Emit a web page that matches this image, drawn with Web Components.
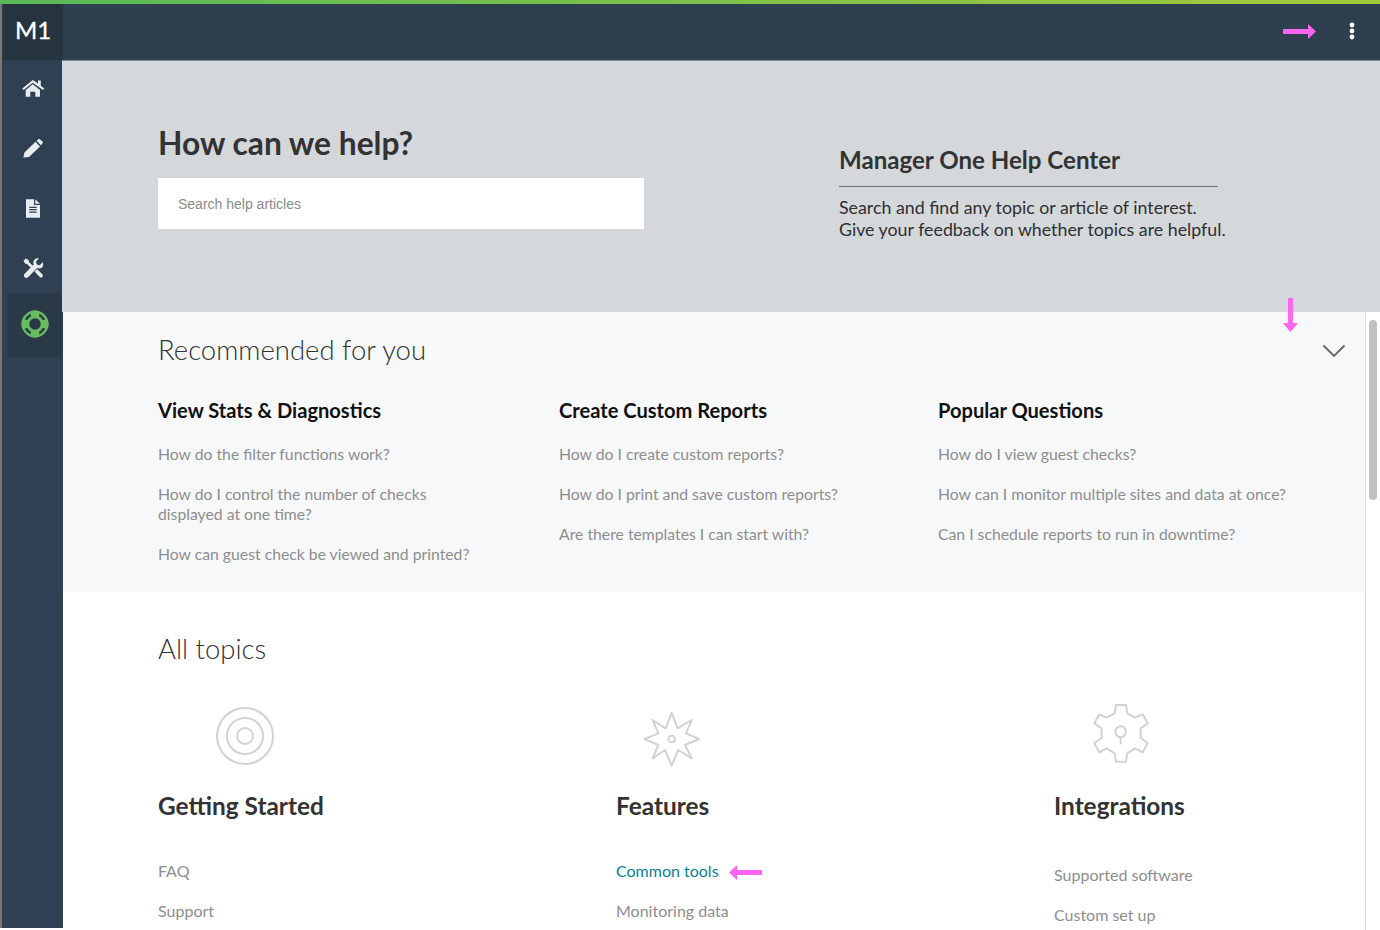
<!DOCTYPE html>
<html>
<head>
<meta charset="utf-8">
<title>Manager One Help Center</title>
<style>
    html, body { margin: 0; height: 930px; overflow: hidden; background: #fff; }
    body { font-family: Lato, "Liberation Sans", sans-serif; }
</style>
</head>
<body>
<m1-app>
    <m1-topbar slot="top"></m1-topbar>
    <m1-sidenav slot="side">
        <m1-navitem icon="home"></m1-navitem>
        <m1-navitem icon="pencil"></m1-navitem>
        <m1-navitem icon="file"></m1-navitem>
        <m1-navitem icon="tools"></m1-navitem>
        <m1-navitem icon="help" active></m1-navitem>
    </m1-sidenav>
    <help-hero></help-hero>
    <div class="scroll-row" style="display:flex">
        <div style="flex:1;min-width:0;border-right:1px solid #dcdcdc;height:618px;overflow:hidden">
            <rec-panel>
                <link-col heading="View Stats &amp; Diagnostics" style="width:401px">
                    <span style="max-width:300px">How do the filter functions work?</span>
                    <span style="max-width:300px">How do I control the number of checks displayed at one time?</span>
                    <span>How can guest check be viewed and printed?</span>
                </link-col>
                <link-col heading="Create Custom Reports" style="width:379px">
                    <span>How do I create custom reports?</span>
                    <span>How do I print and save custom reports?</span>
                    <span>Are there templates I can start with?</span>
                </link-col>
                <link-col heading="Popular Questions">
                    <span>How do I view guest checks?</span>
                    <span>How can I monitor multiple sites and data at once?</span>
                    <span>Can I schedule reports to run in downtime?</span>
                </link-col>
            </rec-panel>
            <all-topics>
                <topic-col heading="Getting Started" icon="target" style="width:458px">
                    <a>FAQ</a>
                    <a>Support</a>
                </topic-col>
                <topic-col heading="Features" icon="star" style="width:438px">
                    <a class="on">Common tools</a>
                    <a>Monitoring data</a>
                </topic-col>
                <topic-col heading="Integrations" icon="gear" lower>
                    <a>Supported software</a>
                    <a>Custom set up</a>
                </topic-col>
            </all-topics>
        </div>
        <scroll-rail></scroll-rail>
    </div>
    <pink-arrow dir="right" style="left:1283px;top:24px"></pink-arrow>
    <pink-arrow dir="down" style="left:1283px;top:298px"></pink-arrow>
    <pink-arrow dir="left" style="left:729px;top:865px"></pink-arrow>
</m1-app>

<script>
const ICONS = {
    home: '<path d="M11.800 4 1.300 12.600l1.300 1.500 9.200-7.400 10.200 7.400 1.300-1.500-3.500-2.800V4.500H17v2.900z"/><path d="M11.800 8.200 4.700 14v6.700h4.600v-5h5v5H19V14z"/>',
    pencil: '<path d="M2.300 21.500 3.500 16.500 14.500 5.800 19 10.500 8 21z"/><path d="M15.600 4.700l1.400-1.300c.7-.6 1.600-.6 2.200 0l2.200 2.100c.6.600.6 1.500 0 2.100L20 9.300z"/>',
    file: '<path fill-rule="evenodd" d="M5 3.300h8V9h6v12.700H5zM8.300 10.700V12h7.400v-1.300zM8.300 13v1.300h7.400V13zM8.300 15.400v1.300h7.400v-1.300z"/><path d="M14.200 3.300 19 7.800h-4.800z"/>',
    tools: '<path d="M4.800 2.500 2.500 4.800l1.500 2.800 2.300.6 4.800 4.800 1.900-1.900-4.800-4.800-.6-2.300z"/><path d="M21.700 6.200l-3.100 3-2.800-.8-.8-2.800 3-3c-2.600-.9-5.400.8-5.700 3.600-.1.800 0 1.600.4 2.400l-9.100 9.100c-1 1-1 2.500 0 3.500 1 1 2.500 1 3.500 0l9.100-9.100c.8.300 1.500.5 2.400.4 2.800-.3 4.500-3.300 3.100-6.100z"/><path d="M13.600 15.600l2.500-2.500 5.200 5.200c.8.800.8 1.900 0 2.600-.7.800-1.800.800-2.600 0z"/>'
};

class M1App extends HTMLElement {
    constructor() {
        super();
        this.attachShadow({mode: 'open'}).innerHTML = `<style>
            :host { display: grid; position: relative; width: 1380px; height: 930px; overflow: hidden;
                grid-template-columns: 63px 1fr; grid-template-rows: 60px 1fr; }
            .top { grid-column: 1 / -1; }
            .body { min-width: 0; display: flex; flex-direction: column; }
        </style>
        <div class="top"><slot name="top"></slot></div>
        <div><slot name="side"></slot></div>
        <div class="body"><slot></slot></div>`;
    }
}

class M1Topbar extends HTMLElement {
    constructor() {
        super();
        this.attachShadow({mode: 'open'}).innerHTML = `<style>
            :host { display: flex; height: 60px; box-sizing: border-box; padding: 4px 0 0 3px; position: relative;
                background: #2e3f50; align-items: stretch; justify-content: space-between;
                box-shadow: inset 2px 0 0 #777, inset 1px 0 0 #fff; }
            .stripe { position: absolute; left: 0; right: 0; top: 0; height: 4px; background: linear-gradient(90deg, #58b957, #a3c93c); }
            .logo { width: 60px; background: #26343f; color: #fff; font: 400 24px/52px Lato, sans-serif; text-align: center; -webkit-text-stroke: .3px #fff; }
            .more { width: 56px; display: flex; align-items: center; justify-content: center; padding-bottom: 2px; }
            .more svg { display: block; }
        </style>
        <div class="stripe"></div>
        <div class="logo">M1</div>
        <div class="more"><svg width="6" height="18" viewBox="0 0 6 18" fill="#fff"><circle cx="3" cy="3" r="2.400"/><circle cx="3" cy="9" r="2.400"/><circle cx="3" cy="15" r="2.400"/></svg></div>`;
    }
}

class M1Sidenav extends HTMLElement {
    constructor() {
        super();
        this.attachShadow({mode: 'open'}).innerHTML = `<style>
            :host { display: block; height: 870px; box-sizing: border-box; padding: 0 0 0 3px; background: #2e4052;
                box-shadow: inset 2px 0 0 #777, inset 1px 0 0 #fff; }
            div { display: flex; flex-direction: column; margin-top: -2px; }
        </style><div><slot></slot></div>`;
    }
}

class M1Navitem extends HTMLElement {
    connectedCallback() {
        if (this.shadowRoot) return;
        const name = this.getAttribute('icon');
        const svg = name === 'help'
            ? `<svg width="28" height="28" viewBox="0 0 28 28"><clipPath id="c"><circle cx="14" cy="14" r="13.500"/></clipPath><circle cx="14" cy="14" r="12.300" fill="none" stroke="#67bb60" stroke-width="2.400"/><g clip-path="url(#c)" fill="#67bb60"><path d="M9 0h10l-1.500 10h-7z"/><path d="M9 28h10l-1.500-10h-7z"/><path d="M0 9v10l10-1.500v-7z"/><path d="M28 9v10l-10-1.500v-7z"/></g><circle cx="14" cy="14" r="7.200" fill="none" stroke="#67bb60" stroke-width="3"/><circle cx="14" cy="14" r="5.700" fill="#2a3947"/></svg>`
            : `<svg width="24" height="24" viewBox="0 0 24 24" fill="#e8ecef">${ICONS[name]}</svg>`;
        this.attachShadow({mode: 'open'}).innerHTML = `<style>
            :host { display: flex; height: 60px; justify-content: center; align-items: center; box-sizing: border-box; }
            :host([active]) { background: #2a3947; height: 64px; margin: -5px 1px 0 4px; padding-bottom: 3px; }
            svg { display: block; }
        </style>${svg}`;
    }
}

class HelpHero extends HTMLElement {
    constructor() {
        super();
        this.attachShadow({mode: 'open'}).innerHTML = `<style>
            :host { display: flex; height: 252px; box-sizing: border-box; background: #d5d8db; padding-left: 96px; color: #333; flex: none;
                margin-left: -1px; border-top: 1px solid #7c8791; }
            .left { width: 681px; padding-top: 63px; }
            h1 { margin: 0 0 16px; font: 700 31.750px/38px Lato, sans-serif; }
            .search { width: 486px; height: 51px; background: #fff; box-sizing: border-box; padding-left: 20px;
                font: 14px/52px "Liberation Sans", sans-serif; color: #8b8b8b; }
            .right { padding-top: 84px; }
            h2 { margin: 0; width: 379px; height: 41px; border-bottom: 1px solid #6b7075; font: 700 24.100px/30px Lato, sans-serif; }
            p { margin: 9px 0 0; font: 17.800px/22px Lato, sans-serif; color: #2f2f2f; white-space: nowrap; }
        </style>
        <div class="left"><h1>How can we help?</h1><div class="search">Search help articles</div></div>
        <div class="right"><h2>Manager One Help Center</h2><p>Search and find any topic or article of interest.<br>Give your feedback on whether topics are helpful.</p></div>`;
    }
}

class RecPanel extends HTMLElement {
    constructor() {
        super();
        this.attachShadow({mode: 'open'}).innerHTML = `<style>
            :host { display: block; height: 280px; box-sizing: border-box; background: #f7f8fa; padding: 20px 0 0 95px; position: relative; color: #333;
                margin-left: -1px; border-left: 1px solid #c6cacd; }
            h2 { margin: 0 0 30px; font: 300 27.500px/36px Lato, sans-serif; color: #333; }
            .cols { display: flex; }
            svg { position: absolute; right: 19px; top: 32px; }
        </style>
        <h2>Recommended for you</h2>
        <svg width="24" height="14" viewBox="0 0 24 14" fill="none" stroke="#666" stroke-width="1.800"><path d="M1.500 1.500 12 12 22.500 1.500"/></svg>
        <div class="cols"><slot></slot></div>`;
    }
}

class LinkCol extends HTMLElement {
    connectedCallback() {
        if (this.shadowRoot) return;
        this.attachShadow({mode: 'open'}).innerHTML = `<style>
            :host { display: block; flex: none; }
            h3 { margin: 0 0 22px; font: 700 20.100px/24px Lato, sans-serif; color: #111; }
            .list { display: flex; flex-direction: column; gap: 20px; }
            ::slotted(span) { display: block; font: 15.750px/20px Lato, sans-serif; color: #8e8e8e; }
        </style>
        <h3>${this.getAttribute('heading').replace('&', '&amp;')}</h3>
        <div class="list"><slot></slot></div>`;
    }
}

class AllTopics extends HTMLElement {
    constructor() {
        super();
        this.attachShadow({mode: 'open'}).innerHTML = `<style>
            :host { display: block; padding: 39px 0 0 95px; background: #fff; }
            h2 { margin: 0 0 28px; font: 300 27.500px/36px Lato, sans-serif; color: #333; }
            .cols { display: flex; }
        </style>
        <h2>All topics</h2>
        <div class="cols"><slot></slot></div>`;
    }
}

const TOPIC_ICONS = {
    target: `<svg width="90" height="75" viewBox="0 0 90 75" fill="none" stroke="#d2d2d2" stroke-width="2" style="margin-left:42px"><circle cx="45" cy="41" r="28"/><circle cx="45" cy="41" r="18"/><circle cx="45" cy="41" r="8"/></svg>`,
    star: `<svg width="90" height="75" viewBox="0 0 270 225" fill="none" stroke="#d2d2d2" stroke-width="6" stroke-linejoin="round" style="margin:5px 0 0 14px"><path d="M125 38 143 85 185 60 168 100 207 117 165 135 185 175 145 150 125 197 105 150 68 175 85 135 43 117 85 100 68 60 107 85z"/><circle cx="125" cy="117" r="10"/></svg>`,
    gear: `<svg width="85" height="75" viewBox="0 0 255 225" fill="none" stroke="#d2d2d2" stroke-width="6" stroke-linejoin="round" style="margin-left:26px"><path d="M108 30H138L142 55 165 68 188 58 203 85 182 100V128L203 145 188 172 165 160 142 175 138 200H108L104 175 80 160 58 172 43 145 65 128V100L43 85 58 58 80 68 104 55z"/><circle cx="122" cy="110" r="16"/><path d="M122 126V148"/></svg>`
};

class TopicCol extends HTMLElement {
    connectedCallback() {
        if (this.shadowRoot) return;
        const lower = this.hasAttribute('lower');
        this.attachShadow({mode: 'open'}).innerHTML = `<style>
            :host { display: block; flex: none; }
            .icon { height: 75px; display: flow-root; }
            .icon svg { display: block; }
            h3 { margin: 20px 0 ${lower ? 42 : 38}px; font: 700 24.400px/32px Lato, sans-serif; color: #333; }
            .list { display: flex; flex-direction: column; gap: 18px; }
            ::slotted(a) { display: block; font: 16px/22px Lato, sans-serif; color: #8e8e8e; }
            ::slotted(a.on) { color: #0b7f97; }
        </style>
        <div class="icon">${TOPIC_ICONS[this.getAttribute('icon')]}</div>
        <h3>${this.getAttribute('heading')}</h3>
        <div class="list"><slot></slot></div>`;
    }
}

class ScrollRail extends HTMLElement {
    constructor() {
        super();
        this.attachShadow({mode: 'open'}).innerHTML = `<style>
            :host { display: block; width: 14px; flex: none; padding: 8px 3px 0 3px; box-sizing: border-box; background: #fff; }
            div { height: 180px; width: 8px; border-radius: 4px; background: #c1c1c1; }
        </style><div></div>`;
    }
}

class PinkArrow extends HTMLElement {
    connectedCallback() {
        if (this.shadowRoot) return;
        const paths = {
            right: ['33', '15', 'M0 5h25V0l8 7.500-8 7.500v-5H0z'],
            left: ['33', '15', 'M33 5H8V0L0 7.500 8 15v-5h25z'],
            down: ['15', '34', 'M5 0v25H0l7.500 9 7.500-9h-5V0z']
        }[this.getAttribute('dir')];
        this.attachShadow({mode: 'open'}).innerHTML = `<style>
            :host { display: block; position: absolute; line-height: 0; }
        </style><svg width="${paths[0]}" height="${paths[1]}" viewBox="0 0 ${paths[0]} ${paths[1]}" fill="#ff66f0"><path d="${paths[2]}"/></svg>`;
    }
}

customElements.define('m1-app', M1App);
customElements.define('m1-topbar', M1Topbar);
customElements.define('m1-sidenav', M1Sidenav);
customElements.define('m1-navitem', M1Navitem);
customElements.define('help-hero', HelpHero);
customElements.define('rec-panel', RecPanel);
customElements.define('link-col', LinkCol);
customElements.define('all-topics', AllTopics);
customElements.define('topic-col', TopicCol);
customElements.define('scroll-rail', ScrollRail);
customElements.define('pink-arrow', PinkArrow);
</script>
</body>
</html>
